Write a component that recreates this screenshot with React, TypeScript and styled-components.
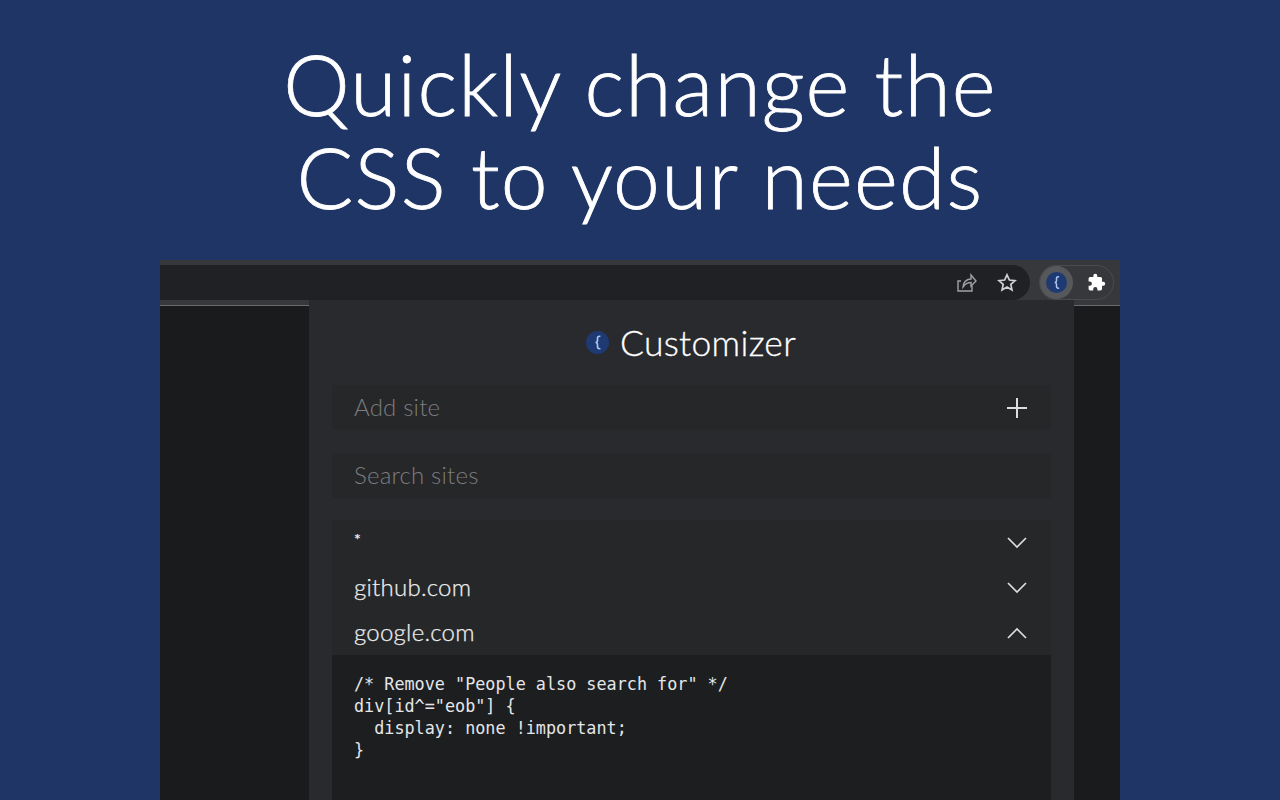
import React from "react";
import styled, { createGlobalStyle } from "styled-components";

const Global = createGlobalStyle`
  html, body { margin: 0; padding: 0; width: 1280px; height: 800px; overflow: hidden; background: #1f3566; }
  body { font-family: "Lato", "Open Sans", sans-serif; }
`;

const Page = styled.div`
  width: 1280px;
  height: 800px;
  background: #1f3566;
  display: flex;
  flex-direction: column;
  align-items: center;
  overflow: hidden;
`;

const Headline = styled.h1`
  margin: 0;
  flex: none;
  padding-top: 37px;
  height: 260px;
  box-sizing: border-box;
  font-family: "Lato", sans-serif;
  font-weight: 300;
  -webkit-text-stroke: 0.8px #ffffff;
  font-size: 84px;
  line-height: 93px;
  letter-spacing: 1.2px;
  color: #ffffff;
  text-align: center;
`;

const Browser = styled.div`
  position: relative;
  width: 960px;
  flex: 1;
  background: #1a1b1c;
`;

const Toolbar = styled.div`
  height: 46px;
  box-sizing: border-box;
  padding-top: 5px;
  background: #37383b;
  border-bottom: 1px solid #6a6b6e;
  display: flex;
  align-items: flex-start;
`;

const Omnibox = styled.div`
  width: 870px;
  height: 35px;
  background: #202124;
  border-radius: 0 18px 18px 0;
  display: flex;
  align-items: center;
  justify-content: flex-end;
  gap: 20px;
  padding-right: 13px;
  box-sizing: border-box;
`;

const ExtensionGroup = styled.div`
  margin-left: 9px;
  width: 75px;
  height: 35px;
  box-sizing: border-box;
  border: 1px solid #4a4b4e;
  border-radius: 18px;
  display: flex;
  align-items: center;
  justify-content: space-between;
  padding-right: 7px;
`;

const ActiveExtension = styled.div`
  width: 33px;
  height: 33px;
  border-radius: 50%;
  background: #57585b;
  display: flex;
  align-items: center;
  justify-content: center;
`;

const Popup = styled.div`
  position: absolute;
  left: 149px;
  top: 40px;
  width: 765px;
  bottom: 0;
  box-sizing: border-box;
  padding: 0 23px;
  background: #292a2d;
  display: flex;
  flex-direction: column;
`;

const Title = styled.div`
  height: 85px;
  flex: none;
  display: flex;
  align-items: center;
  justify-content: center;
  gap: 11px;
  font-size: 35.5px;
  font-weight: 300;
  -webkit-text-stroke: 0.3px #ffffff;
  letter-spacing: 0.3px;
  color: #ffffff;
  padding: 0 1px 1px 0;
  box-sizing: border-box;
`;

const Field = styled.div<{ $gap: number }>`
  height: 45px;
  margin-bottom: ${(p) => p.$gap}px;
  padding: 0 24px 0 22px;
  background: #262729;
  display: flex;
  align-items: center;
  justify-content: space-between;
  font-size: 24px;
  font-weight: 300;
  letter-spacing: 0.2px;
  color: #7c7d80;
  flex: none;
`;

const Placeholder = styled.span`
  padding-bottom: 3px;
`;

const List = styled.div`
  background: #262729;
  flex: 1;
  display: flex;
  flex-direction: column;
`;

const SiteRow = styled.div`
  height: 45px;
  padding: 0 24px 0 22px;
  display: flex;
  align-items: center;
  justify-content: space-between;
  font-size: 24px;
  font-weight: 300;
  -webkit-text-stroke: 0.25px #eceef0;
  letter-spacing: 0.25px;
  color: #eceef0;
  flex: none;
`;

const SiteName = styled.span`
  padding-bottom: 2px;
`;

const StarLabel = styled.span`
  align-self: flex-start;
  padding-top: 8px;
  font-size: 16px;
  font-weight: 400;
  line-height: 22px;
`;

const Code = styled.pre`
  margin: 0;
  flex: 1;
  padding: 18px 22px;
  background: #1d1e20;
  font-family: "DejaVu Sans Mono", monospace;
  font-size: 16.8px;
  line-height: 22px;
  color: #e4e6e9;
`;

const LogoIcon = ({ size }: { size: number }) => (
  <svg width={size} height={size} viewBox="0 0 24 24">
    <circle cx="12" cy="12" r="12" fill="#1f3a73" />
    <path
      d="M15 5.500h-.8c-1.500 0-2.200.7-2.200 2v2.500c0 1.200-.6 1.900-2 2 1.400.1 2 .8 2 2v2.500c0 1.300.7 2 2.200 2h.8"
      fill="none"
      stroke="#a9c7f5"
      strokeWidth="1.700"
    />
  </svg>
);

const Chevron = ({ up }: { up?: boolean }) => (
  <svg width="20" height="12" viewBox="0 0 20 12">
    <path d={up ? "M1 11 10 2l9 9" : "M1 1l9 9 9-9"} fill="none" stroke="#dcdde0" strokeWidth="1.700" />
  </svg>
);

export default function App() {
  return (
    <Page>
      <Global />
      <Headline>
        Quickly change the
        <br />
        CSS to your needs
      </Headline>
      <Browser>
        <Toolbar>
          <Omnibox>
            <svg width="21" height="19" viewBox="0 0 21 19">
              <path d="M5 8H2v10h14v-5M7 14c0-5 4-8 8-8V2l5 6-5 5V9.500c-3.500 0-6 1.500-8 4.500z" fill="none" stroke="#a0a1a4" strokeWidth="1.400" />
            </svg>
            <svg width="20" height="19" viewBox="0 0 20 19">
              <path d="M10 1.800l2.400 5.200 5.700.6-4.300 3.800 1.200 5.600-5-2.900-5 2.900 1.200-5.600-4.300-3.800 5.700-.6z" fill="none" stroke="#d0d1d4" strokeWidth="1.700" />
            </svg>
          </Omnibox>
          <ExtensionGroup>
            <ActiveExtension>
              <LogoIcon size={21} />
            </ActiveExtension>
            <svg width="19" height="19" viewBox="0 0 24 24">
              <path fill="#ffffff" d="M20.500 11H19V7a2 2 0 0 0-2-2h-4V3.500a2.500 2.500 0 0 0-5 0V5H4a2 2 0 0 0-2 2v3.800h1.500a2.700 2.700 0 0 1 0 5.400H2V20a2 2 0 0 0 2 2h3.800v-1.500a2.700 2.700 0 0 1 5.400 0V22H17a2 2 0 0 0 2-2v-4h1.500a2.500 2.500 0 0 0 0-5z" />
            </svg>
          </ExtensionGroup>
        </Toolbar>
        <Popup>
          <Title>
            <LogoIcon size={23} />
            Customizer
          </Title>
          <Field $gap={23}>
            <Placeholder>Add site</Placeholder>
            <svg width="20" height="20" viewBox="0 0 20 20">
              <path d="M10 0v20M0 10h20" stroke="#dcdde0" strokeWidth="2" />
            </svg>
          </Field>
          <Field $gap={22}>
            <Placeholder>Search sites</Placeholder>
          </Field>
          <List>
            <SiteRow>
              <StarLabel>*</StarLabel>
              <Chevron />
            </SiteRow>
            <SiteRow>
              <SiteName>github.com</SiteName>
              <Chevron />
            </SiteRow>
            <SiteRow>
              <SiteName>google.com</SiteName>
              <Chevron up />
            </SiteRow>
            <Code>{`/* Remove "People also search for" */
div[id^="eob"] {
  display: none !important;
}`}</Code>
          </List>
        </Popup>
      </Browser>
    </Page>
  );
}
